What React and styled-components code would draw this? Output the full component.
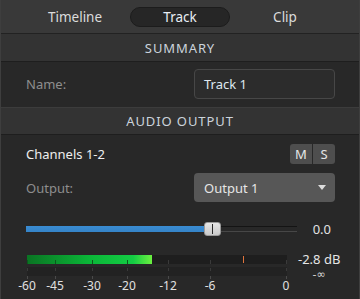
import styled, { createGlobalStyle } from 'styled-components'

const GlobalStyle = createGlobalStyle`
  html, body {
    margin: 0;
    padding: 0;
    background: #282828;
  }
  body {
    font-family: "Noto Sans", "Open Sans", sans-serif;
    font-size: 13px;
    color: #e4e4e4;
  }
`

const Panel = styled.div`
  width: 360px;
  height: 299px;
  box-sizing: border-box;
  background: #282828;
  border-left: 1px solid #3e3e3e;
  border-right: 1px solid #3e3e3e;
  overflow: hidden;
`

const TabBar = styled.div`
  height: 33px;
  background: #393939;
  border-bottom: 1px solid #222;
  display: flex;
  justify-content: center;
  align-items: center;
  gap: 5px;
`

const Tab = styled.div`
  width: 100px;
  height: 20px;
  box-sizing: border-box;
  display: flex;
  align-items: center;
  justify-content: center;
  border-radius: 10px;
  font-size: 13.5px;
  color: ${p => (p.active ? '#e8eef4' : '#dcdcdc')};
  background: ${p => (p.active ? '#262626' : 'transparent')};
  border: 1px solid ${p => (p.active ? '#1c1c1c' : 'transparent')};
`

const Header = styled.div`
  height: 26px;
  background: #333;
  border-top: 1px solid ${p => (p.first ? '#333' : '#3c3c3c')};
  border-bottom: 1px solid #1e1e1e;
  display: flex;
  align-items: center;
  justify-content: center;
  letter-spacing: 0.9px;
  font-size: 13px;
  color: #ccd4dc;
`

const Section = styled.div`
  padding: ${p => p.pad || '0'};
  display: flex;
  flex-direction: column;
`

const Row = styled.div`
  display: flex;
  align-items: center;
  justify-content: space-between;
  height: ${p => p.h || 30}px;
  margin-top: ${p => p.mt || 0}px;
`

const Label = styled.span`
  color: ${p => (p.bright ? '#eeeeee' : '#8e8e8e')};
  font-size: 13px;
`

const TextBox = styled.div`
  width: 141px;
  height: 30px;
  box-sizing: border-box;
  border: 1px solid #474747;
  border-radius: 4px;
  background: #2c2c2c;
  display: flex;
  align-items: center;
  padding-left: 9px;
  color: #dfe8f0;
`

const Select = styled.div`
  width: 141px;
  height: 29px;
  box-sizing: border-box;
  border-radius: 4px;
  background: #575757;
  display: flex;
  align-items: center;
  justify-content: space-between;
  padding: 0 9px 0 10px;
  color: #e6e6e6;
`

const Caret = styled.span`
  width: 0;
  height: 0;
  border-left: 4px solid transparent;
  border-right: 4px solid transparent;
  border-top: 5px solid #dddddd;
`

const ToggleGroup = styled.div`
  display: flex;
  gap: 1px;
  border-radius: 3px;
  overflow: hidden;
`

const Toggle = styled.div`
  width: 22px;
  height: 20px;
  background: #4e4e4e;
  display: flex;
  align-items: center;
  justify-content: center;
  color: #e6e6e6;
  font-size: 13px;
`

const SliderRow = styled.div`
  display: flex;
  align-items: center;
  height: 16px;
  margin-top: 19px;
`

const Track = styled.div`
  position: relative;
  width: 271px;
  height: 6px;
  box-sizing: border-box;
  border-top: 1px solid #141414;
  border-bottom: 1px solid #474747;
`

const Fill = styled.div`
  position: absolute;
  left: 0;
  top: -1px;
  height: 6px;
  background: linear-gradient(#3a8cd2, #3584c8);
`

const Thumb = styled.div`
  position: absolute;
  top: -5px;
  width: 17px;
  height: 14px;
  margin-left: -8px;
  box-sizing: border-box;
  border-radius: 3px;
  background: linear-gradient(#e6e6e6, #c9c9c9);
  border: 1px solid #9a9a9a;
  &::after {
    content: '';
    position: absolute;
    left: 7px;
    top: 1px;
    width: 1px;
    height: 10px;
    background: #2a2a2a;
  }
`

const Value = styled.span`
  margin-left: auto;
  margin-right: 4px;
  color: #e2e2e2;
`

const MeterRow = styled.div`
  display: flex;
  margin-top: 18px;
`

const MeterArea = styled.div`
  width: 262px;
  flex-shrink: 0;
  svg {
    display: block;
  }
`

const Scale = styled.div`
  position: relative;
  height: 16px;
  line-height: 14px;
  font-size: 12px;
  color: #e0e0e0;
`

const ScaleLabel = styled.span`
  position: absolute;
  top: 0;
  transform: translateX(-50%);
`

const Readout = styled.div`
  margin-left: 10px;
  display: flex;
  flex-direction: column;
  align-items: center;
  white-space: nowrap;
  margin-top: -3px;
`

const Db = styled.span`
  display: block;
  color: #e6e6e6;
  font-size: 13px;
  line-height: 15px;
`

const Inf = styled.span`
  display: block;
  color: #d8d8d8;
  font-family: "DejaVu Sans", sans-serif;
  font-size: 11px;
  line-height: 13px;
  margin-top: 1px;
`

const marks = [
  { l: '-60', x: 1 },
  { l: '-45', x: 29 },
  { l: '-30', x: 66 },
  { l: '-20', x: 101 },
  { l: '-12', x: 142 },
  { l: '-6', x: 184 },
  { l: '0', x: 260 },
]

function Meter() {
  return (
    <svg width="262" height="24" viewBox="0 0 262 24">
      <defs>
        <linearGradient id="lvl" x1="0" x2="1" y1="0" y2="0">
          <stop offset="0" stopColor="#0a7423" />
          <stop offset="0.5" stopColor="#0bb638" />
          <stop offset="0.85" stopColor="#14cc44" />
          <stop offset="1" stopColor="#6cf040" />
        </linearGradient>
      </defs>
      <rect x="1" y="0" width="260" height="9" fill="#1e1e1e" />
      <rect x="1" y="0" width="125" height="9" fill="url(#lvl)" />
      <rect x="1" y="12" width="260" height="9" fill="#222" />
      {marks.map(m => (
        <g key={m.l}>
          <rect x={m.x} y="5" width="1" height="4" fill={m.x < 126 ? '#0a5a1c' : '#3a3a3a'} />
          <rect x={m.x} y="13" width="1" height="3" fill="#3a3a3a" />
          <rect x={m.x} y="21" width="1" height="3" fill="#4a4a4a" />
        </g>
      ))}
      <rect x="217" y="1" width="1" height="7" fill="#e0743c" />
    </svg>
  )
}

export default function App() {
  return (
    <>
      <GlobalStyle />
      <Panel>
        <TabBar>
          <Tab>Timeline</Tab>
          <Tab active>Track</Tab>
          <Tab>Clip</Tab>
        </TabBar>
        <Header first>SUMMARY</Header>
        <Section pad="7px 24px 8px 25px">
          <Row>
            <Label>Name:</Label>
            <TextBox>Track 1</TextBox>
          </Row>
        </Section>
        <Header>AUDIO OUTPUT</Header>
        <Section pad="9px 24px 0 25px">
          <Row h={20}>
            <Label bright>Channels 1-2</Label>
            <ToggleGroup>
              <Toggle>M</Toggle>
              <Toggle>S</Toggle>
            </ToggleGroup>
          </Row>
          <Row h={29} mt={9}>
            <Label>Output:</Label>
            <Select>
              Output 1
              <Caret />
            </Select>
          </Row>
          <SliderRow>
            <Track>
              <Fill style={{ width: 186 }} />
              <Thumb style={{ left: 186 }} />
            </Track>
            <Value>0.0</Value>
          </SliderRow>
          <MeterRow>
            <MeterArea>
              <Meter />
              <Scale>
                {marks.map(m => (
                  <ScaleLabel key={m.l} style={{ left: m.x }}>{m.l}</ScaleLabel>
                ))}
              </Scale>
            </MeterArea>
            <Readout>
              <Db>-2.8 dB</Db>
              <Inf>-∞</Inf>
            </Readout>
          </MeterRow>
        </Section>
      </Panel>
    </>
  )
}
